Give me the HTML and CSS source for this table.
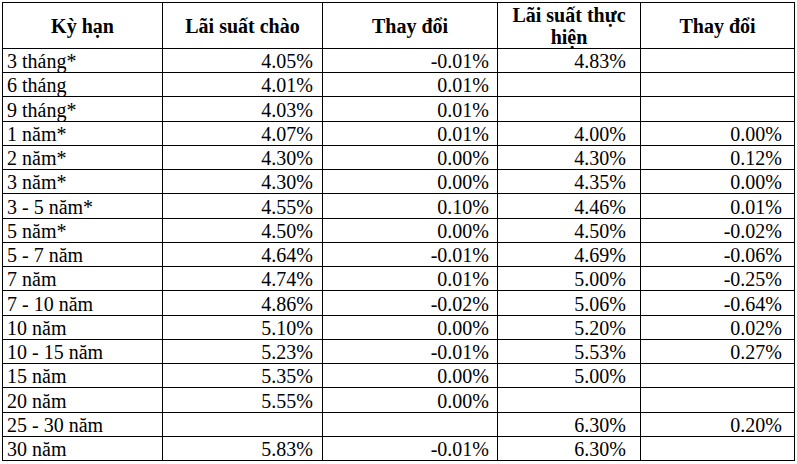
FILE: index.html
```html
<!DOCTYPE html>
<html lang="vi">
<head>
<meta charset="utf-8">
<title>Lãi suất</title>
<link rel="stylesheet" href="styles.css">
</head>
<body>
<table class="rates">
  <colgroup>
    <col class="c1"><col class="c2"><col class="c3"><col class="c4"><col class="c5">
  </colgroup>
  <thead>
    <tr>
      <th>Kỳ hạn</th>
      <th>Lãi suất chào</th>
      <th>Thay đổi</th>
      <th>Lãi suất thực hiện</th>
      <th>Thay đổi</th>
    </tr>
  </thead>
  <tbody>
    <tr><td>3 tháng*</td><td>4.05%</td><td>-0.01%</td><td>4.83%</td><td></td></tr>
    <tr><td>6 tháng</td><td>4.01%</td><td>0.01%</td><td></td><td></td></tr>
    <tr><td>9 tháng*</td><td>4.03%</td><td>0.01%</td><td></td><td></td></tr>
    <tr><td>1 năm*</td><td>4.07%</td><td>0.01%</td><td>4.00%</td><td>0.00%</td></tr>
    <tr><td>2 năm*</td><td>4.30%</td><td>0.00%</td><td>4.30%</td><td>0.12%</td></tr>
    <tr><td>3 năm*</td><td>4.30%</td><td>0.00%</td><td>4.35%</td><td>0.00%</td></tr>
    <tr><td>3 - 5 năm*</td><td>4.55%</td><td>0.10%</td><td>4.46%</td><td>0.01%</td></tr>
    <tr><td>5 năm*</td><td>4.50%</td><td>0.00%</td><td>4.50%</td><td>-0.02%</td></tr>
    <tr><td>5 - 7 năm</td><td>4.64%</td><td>-0.01%</td><td>4.69%</td><td>-0.06%</td></tr>
    <tr><td>7 năm</td><td>4.74%</td><td>0.01%</td><td>5.00%</td><td>-0.25%</td></tr>
    <tr><td>7 - 10 năm</td><td>4.86%</td><td>-0.02%</td><td>5.06%</td><td>-0.64%</td></tr>
    <tr><td>10 năm</td><td>5.10%</td><td>0.00%</td><td>5.20%</td><td>0.02%</td></tr>
    <tr><td>10 - 15 năm</td><td>5.23%</td><td>-0.01%</td><td>5.53%</td><td>0.27%</td></tr>
    <tr><td>15 năm</td><td>5.35%</td><td>0.00%</td><td>5.00%</td><td></td></tr>
    <tr><td>20 năm</td><td>5.55%</td><td>0.00%</td><td></td><td></td></tr>
    <tr><td>25 - 30 năm</td><td></td><td></td><td>6.30%</td><td>0.20%</td></tr>
    <tr><td>30 năm</td><td>5.83%</td><td>-0.01%</td><td>6.30%</td><td></td></tr>
  </tbody>
</table>
</body>
</html>
```

FILE: styles.css
```css
html, body {
  margin: 0;
  padding: 0;
  background: #ffffff;
}

body {
  padding: 2px 0 0 2px;
  font-family: "Liberation Serif", "Times New Roman", serif;
  font-size: 20px;
  color: #000000;
}

.rates {
  border-collapse: collapse;
  table-layout: fixed;
  width: 793px;
}

.c1 { width: 160px; }
.c2 { width: 160px; }
.c3 { width: 175px; }
.c4 { width: 143px; }
.c5 { width: 154px; }

.rates th,
.rates td {
  border: 1px solid #000000;
  padding: 0;
}

.rates th {
  font-weight: bold;
  text-align: center;
  vertical-align: middle;
  line-height: 22px;
  height: 46px;
  padding: 1px 2px 0;
  box-sizing: border-box;
}

.rates tbody tr {
  height: 24.24px;
}

.rates td {
  line-height: 21px;
  padding-top: 2px;
  vertical-align: bottom;
  text-align: right;
  white-space: nowrap;
}

.rates td:nth-child(1) {
  text-align: left;
  padding-left: 4px;
}

.rates td:nth-child(2) { padding-right: 9px; }
.rates td:nth-child(3) { padding-right: 8px; }
.rates td:nth-child(4) { padding-right: 14px; }
.rates td:nth-child(5) { padding-right: 12px; }
```
